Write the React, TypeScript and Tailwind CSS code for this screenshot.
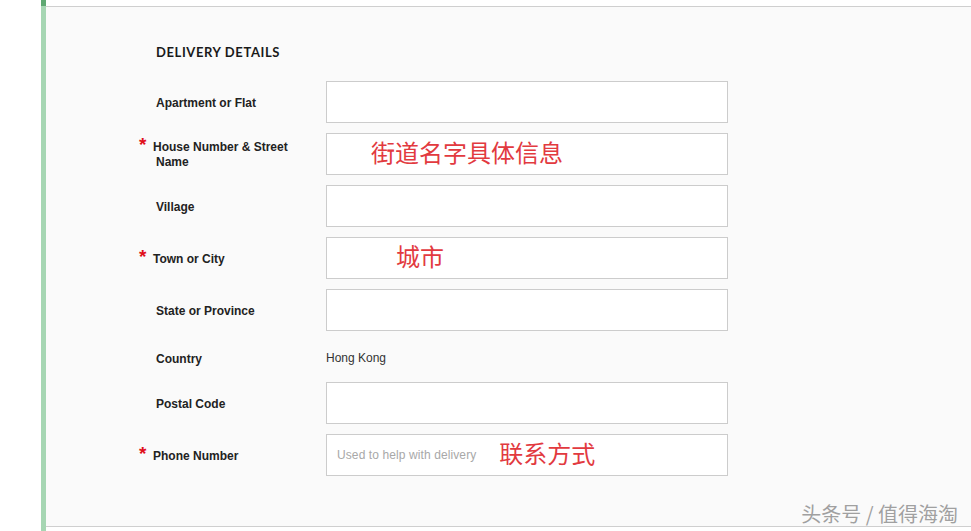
const labelFont = { fontFamily: '"Liberation Sans", Arial, sans-serif' };

type Row = {
  label: string;
  required?: boolean;
  kind: "input" | "text";
  value?: string;
  placeholder?: string;
  note?: string;
  noteIndent?: string;
};

const rows: Row[] = [
  { label: "Apartment or Flat", kind: "input" },
  { label: "House Number & Street Name", required: true, kind: "input", note: "街道名字具体信息", noteIndent: "pl-[44px]" },
  { label: "Village", kind: "input" },
  { label: "Town or City", required: true, kind: "input", note: "城市", noteIndent: "pl-[69px]" },
  { label: "State or Province", kind: "input" },
  { label: "Country", kind: "text", value: "Hong Kong" },
  { label: "Postal Code", kind: "input" },
  { label: "Phone Number", required: true, kind: "input", placeholder: "Used to help with delivery", note: "联系方式" },
];

function FieldLabel({ row }: { row: Row }) {
  return (
    <div className="flex w-[187px] shrink-0 items-start pt-[2px]" style={labelFont}>
      {row.required ? (
        <span className="relative -top-[5px] h-[15px] w-[14px] text-[19px] font-bold leading-none text-[#e0101a]">*</span>
      ) : (
        <span className="w-[17px]" />
      )}
      <span className="w-[140px] pl-[3px] -indent-[3px] text-[12px] font-bold leading-[15px] text-[#222]">
        {row.label}
      </span>
    </div>
  );
}

function FieldRow({ row }: { row: Row }) {
  if (row.kind === "text") {
    return (
      <div className="flex h-[31px] items-center pt-[3px]">
        <FieldLabel row={row} />
        <span className="text-[12px] text-[#333]" style={labelFont}>
          {row.value}
        </span>
      </div>
    );
  }
  return (
    <div className="flex h-[42px] items-center">
      <FieldLabel row={row} />
      <div className="flex h-[42px] w-[402px] items-center border border-[#cccccc] bg-white">
        {row.placeholder && (
          <span className="pl-[10px] text-[12px] tracking-[0.1px] text-[#a8a8a8]" style={labelFont}>
            {row.placeholder}
          </span>
        )}
        {row.note && (
          <span
            className={`${row.placeholder ? "pl-[23px]" : row.noteIndent} relative -top-[2px] text-[24px] leading-none text-[#e23a3f]`}
            style={{ fontFamily: '"Noto Sans CJK SC", sans-serif' }}
          >
            {row.note}
          </span>
        )}
      </div>
    </div>
  );
}

export default function App() {
  return (
    <div className="relative flex h-[531px] w-[971px] overflow-hidden bg-white">
      {/* left gutter */}
      <div className="w-[41px] shrink-0 bg-white" />
      {/* green rail */}
      <div className="flex w-[5px] shrink-0 flex-col bg-[#a6d6b3]">
        <div className="h-[6px] bg-[#5fa872]" />
      </div>
      {/* panel */}
      <div className="flex flex-1 flex-col pt-[6px]">
        <div className="flex h-[521px] flex-col border-y border-[#cfcfcf] bg-[#fafafa] pl-[93px] pt-[37px]">
          <h2
            className="pl-[17px] text-[13px] font-bold leading-[16px] tracking-[0.6px] text-[#1a1a1a]"
            style={{ fontFamily: "Lato, sans-serif" }}
          >
            DELIVERY DETAILS
          </h2>
          <div className="mt-[21px] flex flex-col gap-[10px]">
            {rows.map((r) => (
              <FieldRow key={r.label} row={r} />
            ))}
          </div>
        </div>
      </div>
      {/* watermark */}
      <div
        className="absolute bottom-[7px] right-[13px] text-[20px] leading-none text-[#a0a0a0]"
        style={{ fontFamily: '"Noto Sans CJK SC", sans-serif', textShadow: "0 0 1px #fff" }}
      >
        头条号 / 值得海淘
      </div>
    </div>
  );
}
